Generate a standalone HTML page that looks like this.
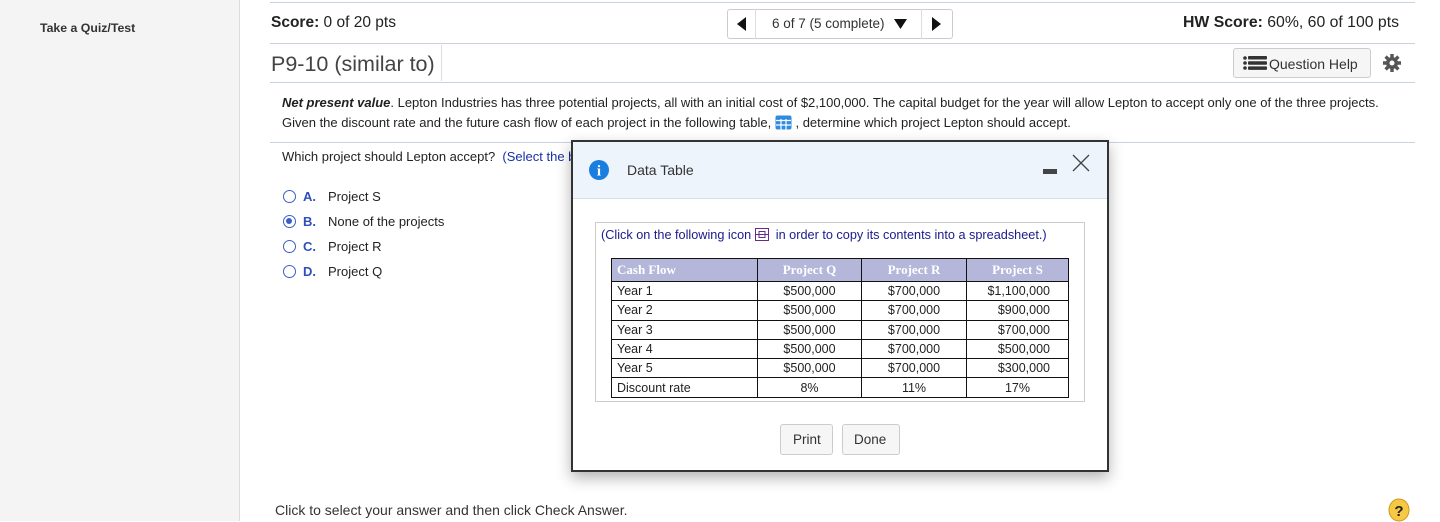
<!DOCTYPE html>
<html><head><meta charset="utf-8"><style>
*{margin:0;padding:0;box-sizing:border-box}
body{width:1440px;height:521px;overflow:hidden;background:#fff;font-family:"Liberation Sans",Arial,sans-serif;color:#222;position:relative}
.a{position:absolute;white-space:nowrap}
.hl{position:absolute;left:270px;width:1145px;height:1px;background:#c9d1e0}
.btn{position:absolute;border:1px solid #ccc;border-radius:3px;background:#f6f6f6}
.opt{position:absolute;left:283px;font-size:13px}
.rad{display:inline-block;width:13px;height:13px;border:1.5px solid #3b5fc9;border-radius:50%;vertical-align:-2px;margin-right:7px;position:relative}
.lt{color:#2e4fbd;font-weight:bold;display:inline-block;width:25px}
table{border-collapse:collapse;position:absolute;left:611px;top:258px;width:458px;font-size:12.5px}
td,th{border:1.5px solid #111;padding:0 5px;height:19.3px}
th{background:#b4b6da;color:#fff;font-family:"Liberation Serif",serif;font-size:13px;height:23px}
td.c{text-align:center}
td.r{text-align:right;padding-right:18px}
</style></head><body>
<div class="a" style="left:0;top:0;width:240px;height:521px;background:#f4f4f4;border-right:1px solid #ddd"></div>
<div class="a" style="left:40px;top:21px;font-size:12.3px;font-weight:bold;color:#333">Take a Quiz/Test</div>
<div class="hl" style="top:2px"></div>
<div class="a" style="left:271px;top:14px;font-size:15.5px"><b>Score:</b> 0 of 20 pts</div>
<div class="btn" style="left:727px;top:9px;width:226px;height:30px;background:#fff"></div>
<div class="a" style="left:755px;top:9px;width:1px;height:30px;background:#ddd"></div>
<div class="a" style="left:921px;top:9px;width:1px;height:30px;background:#ddd"></div>
<svg class="a" style="left:737px;top:17px" width="10" height="14"><path d="M9 0V14L0 7Z" fill="#111"/></svg>
<svg class="a" style="left:932px;top:17px" width="10" height="14"><path d="M0 0V14L9 7Z" fill="#111"/></svg>
<div class="a" style="left:772px;top:16px;font-size:13.5px;color:#333">6 of 7 (5 complete)</div>
<svg class="a" style="left:894px;top:19px" width="13" height="10"><path d="M0 0H13L6.5 10Z" fill="#111"/></svg>
<div class="a" style="left:1183px;top:14px;font-size:15.8px"><b>HW Score:</b> 60%, 60 of 100 pts</div>
<div class="hl" style="top:43px"></div>
<div class="a" style="left:271px;top:52px;font-size:21.5px;color:#444">P9-10 (similar to)</div>
<div class="a" style="left:441px;top:45px;width:1px;height:36px;background:#ddd"></div>
<div class="btn" style="left:1233px;top:48px;width:138px;height:30px"></div>
<svg class="a" style="left:1243px;top:56px" width="24" height="14"><g fill="#333"><circle cx="2" cy="2" r="1.8"/><circle cx="2" cy="7" r="1.8"/><circle cx="2" cy="12" r="1.8"/><rect x="5" y="0" width="19" height="3.5" rx="1"/><rect x="5" y="5.2" width="19" height="3.5" rx="1"/><rect x="5" y="10.4" width="19" height="3.5" rx="1"/></g></svg>
<div class="a" style="left:1269px;top:56px;font-size:14px;color:#333">Question Help</div>
<svg class="a" style="left:1383px;top:54px" width="18" height="18" viewBox="0 0 18 18"><g fill="#555"><circle cx="9" cy="9" r="6"/><g stroke="#555" stroke-width="3.4"><path d="M9 0V18M0 9H18M2.6 2.6L15.4 15.4M15.4 2.6L2.6 15.4"/></g></g><circle cx="9" cy="9" r="2.5" fill="#fff"/></svg>
<div class="hl" style="top:82px"></div>
<div class="a" style="left:282px;top:93px;font-size:13px;line-height:19.5px;color:#222"><b><i>Net present value</i></b>. Lepton Industries has three potential projects, all with an initial cost of $2,100,000. The capital budget for the year will allow Lepton to accept only one of the three projects.<br>Given the discount rate and the future cash flow of each project in the following table, <svg width="17" height="15" style="vertical-align:-3px" viewBox="0 0 17 15"><rect x="0.5" y="0.5" width="16" height="14" rx="2" fill="#2f8be0"/><g stroke="#fff" stroke-width="1.2"><path d="M1 5.5H16M1 10H16M6 4V15M11 4V15"/></g></svg> , determine which project Lepton should accept.</div>
<div class="hl" style="top:142px;left:270px"></div>
<div class="a" style="left:282px;top:149px;font-size:13px">Which project should Lepton accept? &nbsp;<span style="color:#1a2fa8">(Select the b</span></div>
<div class="opt" style="top:189px"><span class="rad"></span><span class="lt">A.</span>Project S</div>
<div class="opt" style="top:214px"><span class="rad"><span style="position:absolute;left:2px;top:2px;width:6px;height:6px;border-radius:50%;background:#3b5fc9"></span></span><span class="lt">B.</span>None of the projects</div>
<div class="opt" style="top:239px"><span class="rad"></span><span class="lt">C.</span>Project R</div>
<div class="opt" style="top:264px"><span class="rad"></span><span class="lt">D.</span>Project Q</div>
<div class="a" style="left:275px;top:502px;font-size:14px;color:#333">Click to select your answer and then click Check Answer.</div>
<svg class="a" style="left:1388px;top:498px" width="22" height="24"><ellipse cx="11" cy="12" rx="10" ry="11" fill="#f7c843" stroke="#c99a1a"/><text x="11" y="18" text-anchor="middle" font-family="Liberation Sans" font-weight="bold" font-size="15" fill="#222">?</text></svg>

<div class="a" style="left:571px;top:140px;width:538px;height:332px;border:2px solid #333;background:#fff;box-shadow:0 6px 14px rgba(0,0,0,.3)"></div>
<div class="a" style="left:573px;top:142px;width:534px;height:57px;background:#eef4fc;border-bottom:1px solid #d5e0ef"></div>
<svg class="a" style="left:589px;top:160px" width="20" height="20"><circle cx="10" cy="10" r="10" fill="#1a7ee0"/><text x="10" y="15.5" text-anchor="middle" font-family="Liberation Serif" font-weight="bold" font-size="15" fill="#fff">i</text></svg>
<div class="a" style="left:627px;top:162px;font-size:14px;color:#333">Data Table</div>
<div class="a" style="left:1043px;top:169px;width:14px;height:5px;background:#444"></div>
<svg class="a" style="left:1072px;top:154px" width="18" height="18"><path d="M1 1L17 17M17 1L1 17" stroke="#444" stroke-width="1.3"/></svg>
<div class="a" style="left:595px;top:222px;width:490px;height:180px;border:1px solid #ccc"></div>
<div class="a" style="left:601px;top:228px;font-size:12.7px;color:#1a1a8c">(Click on the following icon <svg width="14" height="13" style="vertical-align:-2px"><rect x="0.5" y="0.5" width="13" height="12" fill="none" stroke="#6a2a8a"/><path d="M0.5 6.5H13.5M4 3.5H10V9.5H4Z" fill="none" stroke="#6a2a8a"/></svg> &nbsp;in order to copy its contents into a spreadsheet.)</div>
<table>
<tr><th style="text-align:left;width:146px">Cash Flow</th><th style="width:104px">Project Q</th><th style="width:105px">Project R</th><th>Project S</th></tr>
<tr><td>Year 1</td><td class="c">$500,000</td><td class="c">$700,000</td><td class="r">$1,100,000</td></tr>
<tr><td>Year 2</td><td class="c">$500,000</td><td class="c">$700,000</td><td class="r">$900,000</td></tr>
<tr><td>Year 3</td><td class="c">$500,000</td><td class="c">$700,000</td><td class="r">$700,000</td></tr>
<tr><td>Year 4</td><td class="c">$500,000</td><td class="c">$700,000</td><td class="r">$500,000</td></tr>
<tr><td>Year 5</td><td class="c">$500,000</td><td class="c">$700,000</td><td class="r">$300,000</td></tr>
<tr><td>Discount rate</td><td class="c">8%</td><td class="c">11%</td><td class="c">17%</td></tr>
</table>
<div class="btn" style="left:780px;top:424px;width:53px;height:31px"></div>
<div class="a" style="left:793px;top:432px;font-size:13.5px;color:#333">Print</div>
<div class="btn" style="left:842px;top:424px;width:58px;height:31px"></div>
<div class="a" style="left:854px;top:432px;font-size:13.5px;color:#333">Done</div>
</body></html>
